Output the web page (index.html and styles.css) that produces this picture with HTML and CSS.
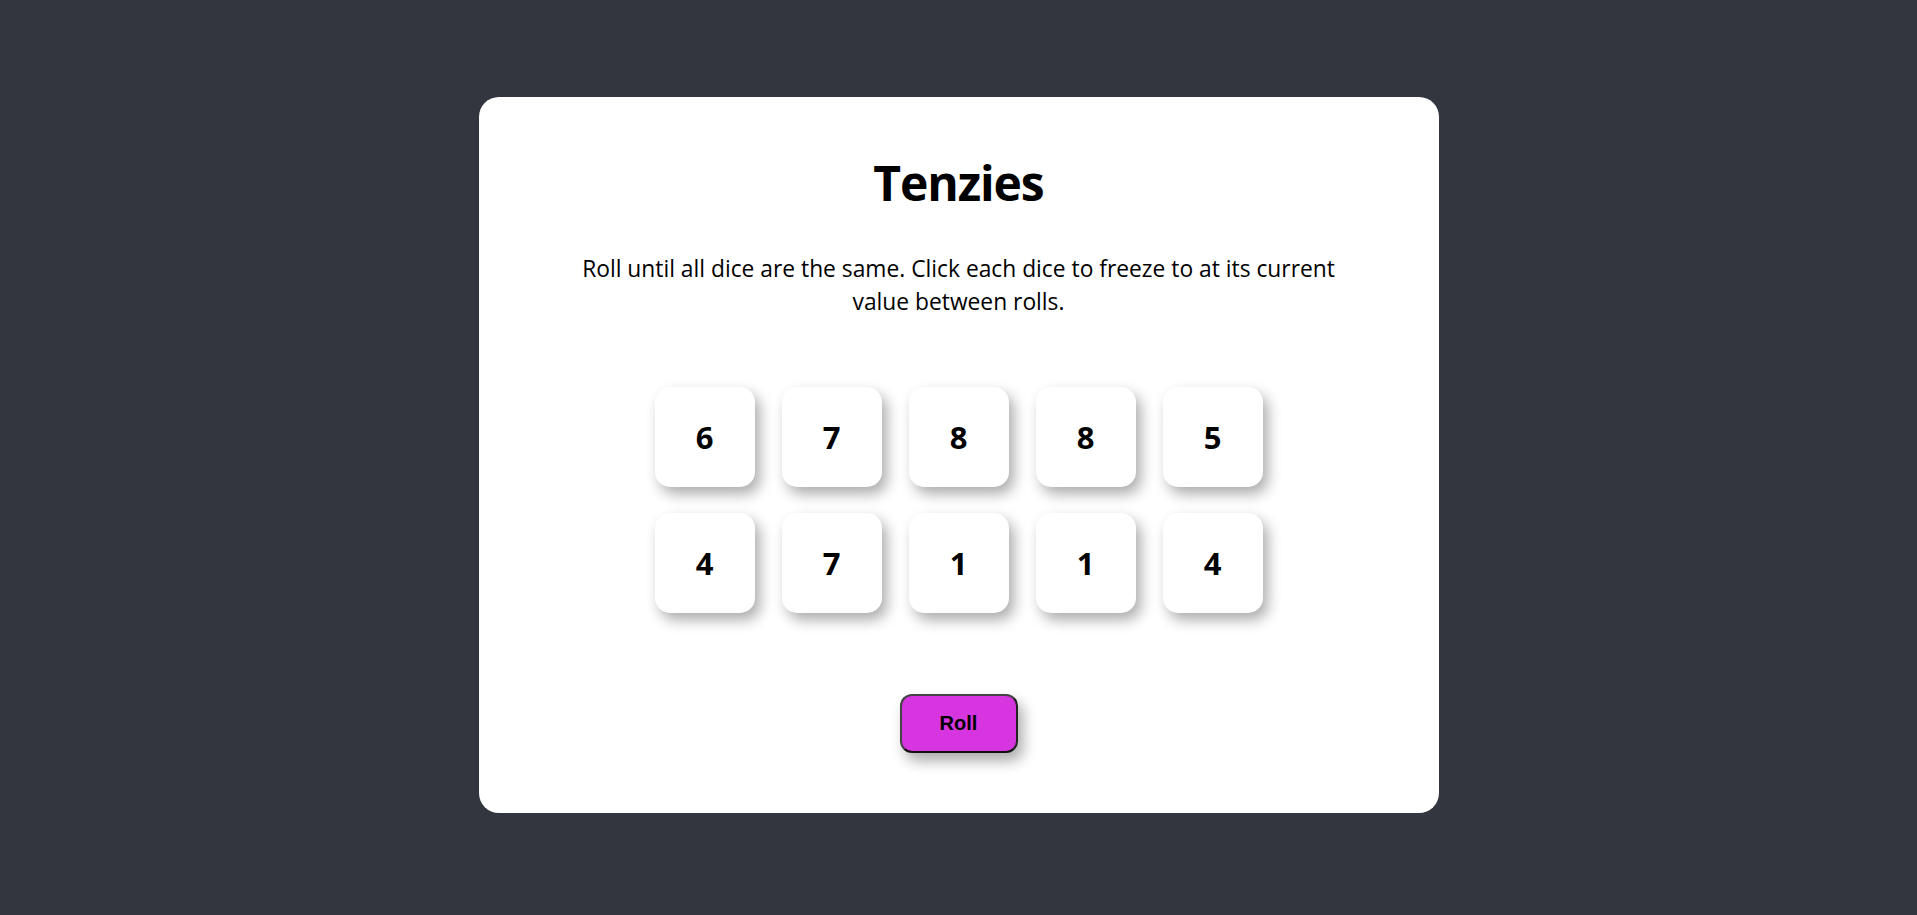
FILE: index.html
```html
<!DOCTYPE html>
<html lang="en">
<head>
<meta charset="utf-8">
<title>Tenzies</title>
<link rel="stylesheet" href="styles.css">
</head>
<body>
<main class="card">
  <h1 class="title">Tenzies</h1>
  <p class="instructions">Roll until all dice are the same. Click each dice to freeze to at its current value between rolls.</p>
  <div class="dice">
    <button class="die">6</button>
    <button class="die">7</button>
    <button class="die">8</button>
    <button class="die">8</button>
    <button class="die">5</button>
    <button class="die">4</button>
    <button class="die">7</button>
    <button class="die">1</button>
    <button class="die">1</button>
    <button class="die">4</button>
  </div>
  <button class="roll">Roll</button>
</main>
</body>
</html>
```

FILE: styles.css
```css
* {
  box-sizing: border-box;
}

html, body {
  margin: 0;
  padding: 0;
}

body {
  background: #33363f;
  height: 100vh;
  display: flex;
  justify-content: center;
  align-items: center;
  font-family: "Open Sans", "Noto Sans", sans-serif;
  color: #000;
}

.card {
  width: 960px;
  background: #fff;
  border-radius: 20px;
  padding: 57px 0 60px;
  display: flex;
  flex-direction: column;
  align-items: center;
  margin-top: -5px;
}

.title {
  margin: 0;
  font-size: 48px;
  line-height: 58px;
  font-weight: 700;
  letter-spacing: -1.1px;
}

.instructions {
  margin: 40px 0 0;
  width: 800px;
  text-align: center;
  font-size: 22.8px;
  line-height: 33px;
  font-weight: 400;
}

.dice {
  margin-top: 69px;
  display: grid;
  grid-template-columns: repeat(5, 100px);
  grid-auto-rows: 100px;
  column-gap: 27px;
  row-gap: 26px;
}

.die {
  border: none;
  background: #fff;
  border-radius: 15px;
  box-shadow: 5px 7px 14px rgba(0, 0, 0, 0.33);
  font-family: "Open Sans", "Noto Sans", sans-serif;
  font-size: 31px;
  font-weight: 700;
  color: #000;
  padding: 0;
}

.roll {
  margin-top: 81px;
  width: 118px;
  height: 59px;
  background: #d635df;
  border: 2px solid #444;
  border-bottom-color: #111;
  border-right-color: #222;
  border-radius: 12px;
  box-shadow: 5px 8px 14px rgba(0, 0, 0, 0.33);
  font-family: "Liberation Sans", Arial, sans-serif;
  font-size: 20px;
  font-weight: 700;
  color: #000;
  padding: 0;
}
```
